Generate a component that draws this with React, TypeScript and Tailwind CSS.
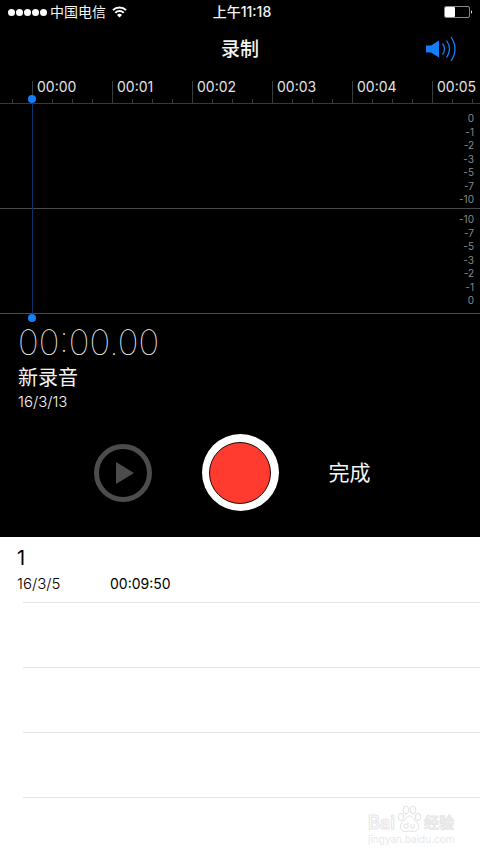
const topScale = ["0", "-1", "-2", "-3", "-5", "-7", "-10"];
const bottomScale = [...topScale].reverse();
const ticks = Array.from({ length: 24 }, (_, i) => i);
const emptyRows = [0, 1, 2];

function StatusBar() {
  return (
    <div className="grid h-6 grid-cols-3 items-center px-2 text-[14px] leading-6">
      <div className="flex items-center whitespace-nowrap">
        <div className="flex gap-px" aria-label="signal">
          {[0, 1, 2, 3, 4].map((dot) => (
            <span key={dot} className="size-[7px] rounded-full bg-white" />
          ))}
        </div>
        <span className="ml-[3px]">中国电信</span>
        <svg className="ml-1.5" width="15" height="12" viewBox="0 0 15 12" fill="none" stroke="white" strokeWidth="1.9">
          <path d="M0.9 4.200a9.300 9.300 0 0 1 13.200 0" />
          <path d="M3.300 6.800a5.900 5.900 0 0 1 8.400 0" />
          <path d="M7.500 11.600 5 9a3.500 3.500 0 0 1 5 0z" fill="white" stroke="none" />
        </svg>
      </div>
      <div className="pl-1 text-center font-medium whitespace-nowrap">上午11:18</div>
      <svg className="justify-self-end" width="28" height="12" viewBox="0 0 28 12">
        <rect x="0.5" y="0.5" width="25" height="11" rx="1.5" fill="none" stroke="#8a8a8a" />
        <rect x="1" y="1" width="10" height="10" rx="1" fill="white" />
        <path d="M27 4.3q1 .4 1 1.7t-1 1.7z" fill="white" />
      </svg>
    </div>
  );
}

function Ruler() {
  return (
    <div className="flex h-[30px] items-end overflow-hidden border-b border-[#3a3a3a] pl-3">
      {ticks.map((i) =>
        i % 4 === 1 ? (
          <div key={i} className="h-[22px] w-5 shrink-0 border-l border-[#3a3a3a] pl-1 text-[14px] leading-[11px] whitespace-nowrap text-[#e4e4e4]">
            {`00:${String((i - 1) / 4).padStart(2, "0")}`}
          </div>
        ) : (
          <div key={i} className="h-1 w-5 shrink-0 border-l border-[#3a3a3a]" />
        ),
      )}
    </div>
  );
}

function Scale({ values }: { values: string[] }) {
  return (
    <div className="flex h-[93px] flex-col justify-between text-right text-[10px] leading-3 text-[#8a8a8a]">
      {values.map((value) => (
        <span key={value}>{value}</span>
      ))}
    </div>
  );
}

function Waveform() {
  return (
    <div className="relative">
      <Ruler />
      <div className="h-[105px] border-b border-[#4a4a4a] pt-2 pr-1.5">
        <Scale values={topScale} />
      </div>
      <div className="h-[105px] border-b border-[#4a4a4a] pt-1 pr-1.5">
        <Scale values={bottomScale} />
      </div>
      <div className="absolute top-[21px] -bottom-2 left-7 flex w-2 flex-col items-center">
        <span className="size-2 rounded-full bg-[#147efb]" />
        <span className="w-px flex-1 bg-[#093266]" />
        <span className="size-2 rounded-full bg-[#147efb]" />
      </div>
    </div>
  );
}

function Watermark() {
  return (
    <div className="absolute right-[26px] bottom-2 w-[86px] text-[#e8e8e8]" aria-hidden="true">
      <div className="flex h-8 items-end justify-between leading-5 whitespace-nowrap text-white [-webkit-text-stroke:1px_#e6e6e6]">
        <span className="text-[18px] font-semibold">Bai</span>
        <svg className="shrink-0" width="25" height="28" viewBox="0 0 25 28" fill="white" stroke="#e2e2e2">
          <ellipse cx="4" cy="12" rx="2.8" ry="3.6" />
          <ellipse cx="9" cy="5" rx="2.8" ry="4" />
          <ellipse cx="16" cy="5" rx="2.8" ry="4" />
          <ellipse cx="21" cy="12" rx="2.8" ry="3.6" />
          <path d="M12.500 11c3 0 4 4 7 6s3 9-2 9.500c-2 0-3-.5-5-.5s-3 .5-5 .5c-5-.5-5-7.500-2-9.500s4-6 7-6z" />
          <path d="M11 17v6H9a2 2 0 0 1 0-4h2M14 19v3q0 1 1 1h2v-4" fill="none" />
        </svg>
        <span className="text-[15px] font-medium">经验</span>
      </div>
      <div className="text-[10px] leading-3 whitespace-nowrap">jingyan.baidu.com</div>
    </div>
  );
}

export default function App() {
  return (
    <div className="relative flex min-h-screen flex-col bg-white font-['Inter','Noto_Sans_CJK_SC',sans-serif] antialiased">
      <section className="bg-black text-[#f4f4f4]">
        <StatusBar />
        <header className="grid h-[50px] grid-cols-3 items-center pr-[22px]">
          <h1 className="col-start-2 pt-0.5 pl-[22px] text-center text-[19px] leading-7 font-medium">录制</h1>
          <button type="button" aria-label="扬声器" className="justify-self-end">
            <svg width="32" height="26" viewBox="0 0 32 26" fill="none" stroke="#147efb">
              <path d="M0 9.500h5l8-5v17l-8-5H0z" fill="#147efb" stroke="none" />
              <path d="M16.500 7.500q4 5.500 0 11" strokeWidth="1.300" />
              <path d="M20.500 4.500q6 8.500 0 17" strokeWidth="1.300" />
              <path d="M25 1q8 12 0 24" strokeWidth="1.300" />
            </svg>
          </button>
        </header>
        <Waveform />
        <div className="px-[18px] pt-2">
          <div className="text-[35px] leading-10 font-thin text-white">00:00.00</div>
          <div className="pt-0.5 text-[20px] leading-7">新录音</div>
          <div className="text-[15px] leading-5 font-light">16/3/13</div>
        </div>
        <div className="grid grid-cols-[1fr_auto_1fr] items-center gap-[50px] pt-[22px] pb-[26px]">
          <button type="button" aria-label="播放" className="flex size-[58px] items-center justify-center justify-self-end rounded-full border-[5px] border-[#4c4c4c]">
            <svg width="18" height="24" viewBox="0 0 18 24" fill="#4c4c4c" className="ml-1">
              <path d="M0 1v22l18-11z" />
            </svg>
          </button>
          <button type="button" aria-label="录音" className="flex size-[77px] items-center justify-center rounded-full bg-white">
            <span className="size-[62px] rounded-full border border-[#200806] bg-[#ff3b30]" />
          </button>
          <button type="button" className="justify-self-start text-[21px] leading-7">完成</button>
        </div>
      </section>
      <ul className="text-black">
        <li className="pl-[23px]">
          <div className="h-[66px] border-b border-[#e4e4e4] pt-[9px]">
            <div className="-ml-1.5 text-[20px] leading-6">1</div>
            <div className="-ml-1.5 flex pt-1 leading-5">
              <span className="w-[93px] text-[15px] font-light">16/3/5</span>
              <span className="text-[14px]">00:09:50</span>
            </div>
          </div>
        </li>
        {emptyRows.map((row) => (
          <li key={row} className="ml-[23px] h-[65px] border-b border-[#e4e4e4]" />
        ))}
      </ul>
      <Watermark />
    </div>
  );
}
